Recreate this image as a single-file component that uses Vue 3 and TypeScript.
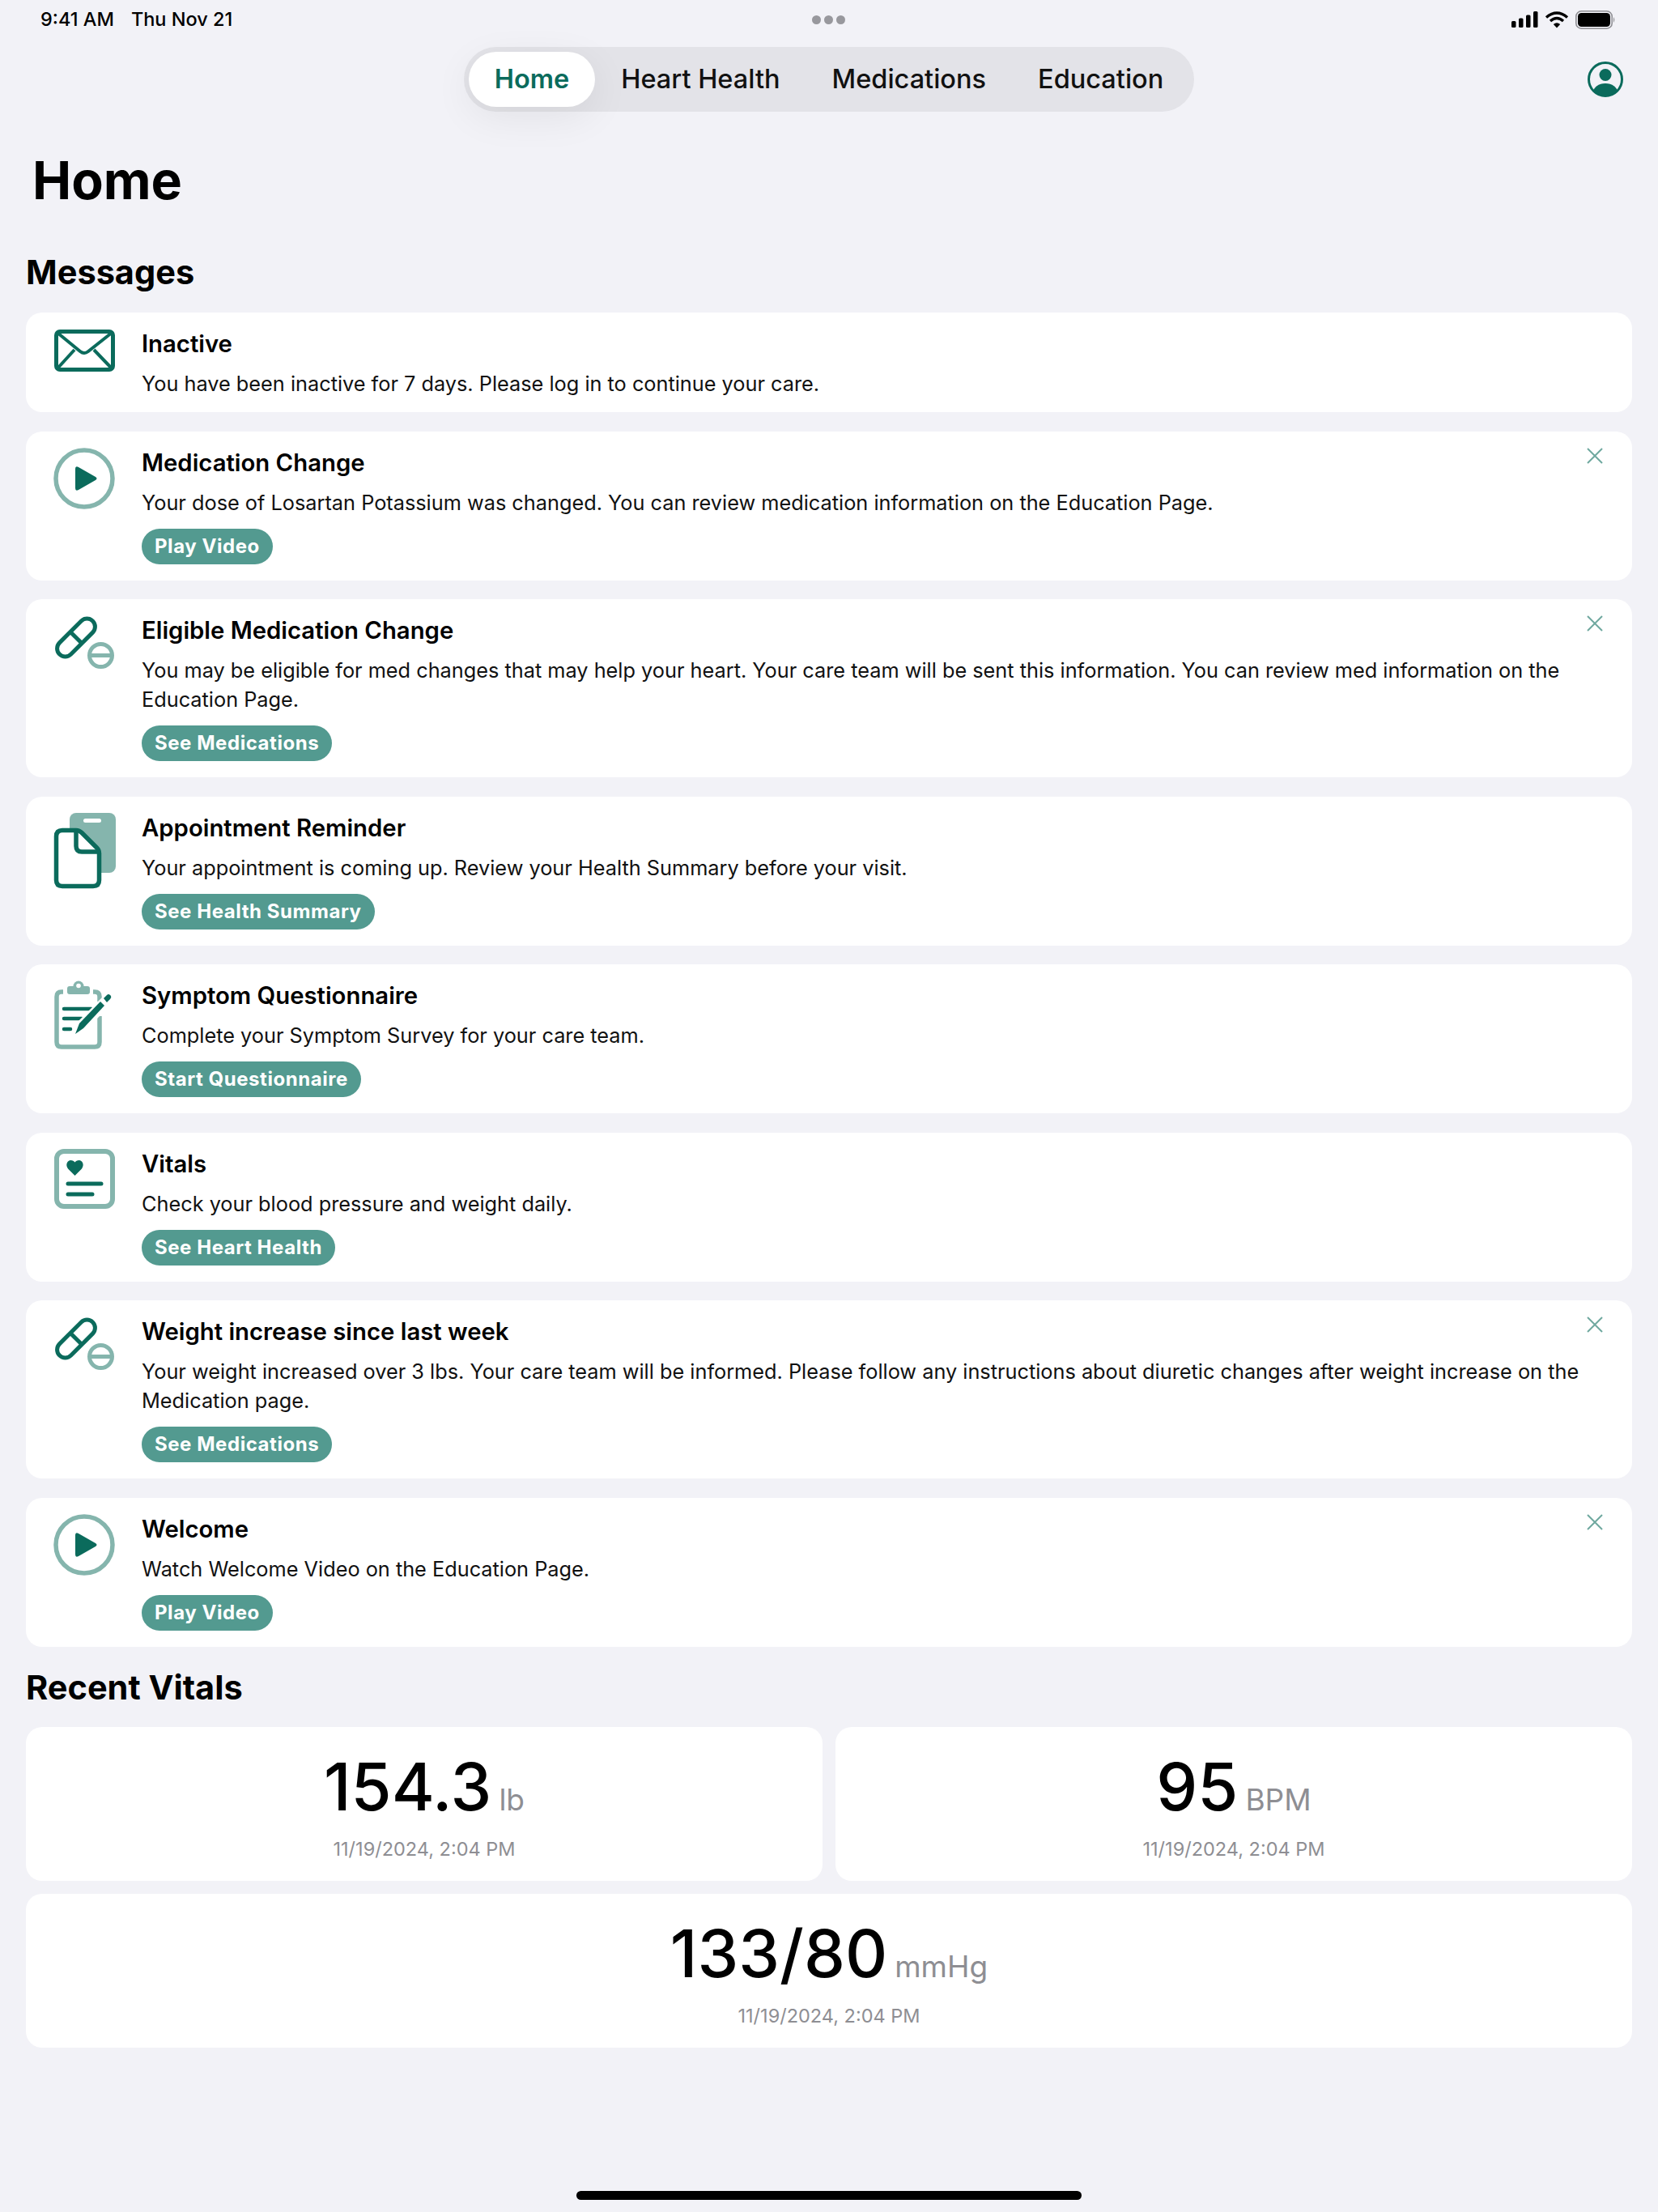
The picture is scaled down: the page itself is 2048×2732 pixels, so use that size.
<script setup lang="ts">
interface Message {
  icon: string
  title: string
  body: string
  action?: string
  closable?: boolean
}

const tabs: string[] = ['Home', 'Heart Health', 'Medications', 'Education']

const messages: Message[] = [
  { icon: 'mail', title: 'Inactive', body: 'You have been inactive for 7 days. Please log in to continue your care.' },
  { icon: 'play', title: 'Medication Change', body: 'Your dose of Losartan Potassium was changed. You can review medication information on the Education Page.', action: 'Play Video', closable: true },
  { icon: 'pill', title: 'Eligible Medication Change', body: 'You may be eligible for med changes that may help your heart. Your care team will be sent this information. You can review med information on the Education Page.', action: 'See Medications', closable: true },
  { icon: 'doc', title: 'Appointment Reminder', body: 'Your appointment is coming up. Review your Health Summary before your visit.', action: 'See Health Summary' },
  { icon: 'clip', title: 'Symptom Questionnaire', body: 'Complete your Symptom Survey for your care team.', action: 'Start Questionnaire' },
  { icon: 'vitals', title: 'Vitals', body: 'Check your blood pressure and weight daily.', action: 'See Heart Health' },
  { icon: 'pill', title: 'Weight increase since last week', body: 'Your weight increased over 3 lbs. Your care team will be informed. Please follow any instructions about diuretic changes after weight increase on the Medication page.', action: 'See Medications', closable: true },
  { icon: 'play', title: 'Welcome', body: 'Watch Welcome Video on the Education Page.', action: 'Play Video', closable: true },
]

const vitals = [
  { value: '154.3', unit: 'lb', date: '11/19/2024, 2:04 PM' },
  { value: '95', unit: 'BPM', date: '11/19/2024, 2:04 PM' },
  { value: '133/80', unit: 'mmHg', date: '11/19/2024, 2:04 PM', wide: true },
]
</script>

<template>
  <div class="page">
    <div class="status">
      <div class="status-left"><span>9:41 AM</span><span>Thu Nov 21</span></div>
      <div class="dots"><i></i><i></i><i></i></div>
      <div class="status-right">
        <svg width="33" height="20" viewBox="0 0 33 20"><rect x="0" y="12" width="5.5" height="8" rx="1.5"/><rect x="9" y="8.500" width="5.500" height="11.500" rx="1.500"/><rect x="18" y="4.500" width="5.500" height="15.500" rx="1.500"/><rect x="27" y="0" width="5.500" height="20" rx="1.500"/></svg>
        <svg width="30" height="23" viewBox="0 0 30 23" fill="none" stroke="#000" stroke-width="3.400"><path d="M2 8.500 Q15 -2.500 28 8.500"/><path d="M7 13 Q15 6 23 13"/><path d="M15 21.500 L10.800 17 Q15 13.500 19.200 17 Z" fill="#000" stroke="none"/></svg>
        <svg width="50" height="23" viewBox="0 0 50 23"><rect x="0.800" y="0.800" width="44.400" height="21.400" rx="6.500" fill="none" stroke="#8e8e93" stroke-width="1.600"/><rect x="3" y="3" width="40" height="17" rx="4.500"/><path d="M47 8 Q49.500 11.500 47 15 Z" fill="#8e8e93"/></svg>
      </div>
    </div>

    <header class="header">
      <nav class="tabs">
        <span v-for="(tab, i) in tabs" :key="tab" class="tab" :class="{ active: i === 0 }">{{ tab }}</span>
      </nav>
      <svg class="profile" width="44" height="44" viewBox="0 0 44 44">
        <defs><clipPath id="pc"><circle cx="22" cy="22" r="21"/></clipPath></defs>
        <circle cx="22" cy="22" r="20.500" fill="none" stroke="#0b6b5c" stroke-width="3"/>
        <circle cx="22" cy="16.500" r="7.500" fill="#0b6b5c"/>
        <ellipse cx="22" cy="38" rx="15" ry="11" fill="#0b6b5c" clip-path="url(#pc)"/>
      </svg>
    </header>

    <h1 class="title">Home</h1>
    <h2 class="section">Messages</h2>

    <section class="list">
      <article v-for="m in messages" :key="m.title" class="card">
        <svg class="icon" width="76" height="76" viewBox="0 0 76 76" fill="none">
          <template v-if="m.icon === 'mail'">
            <rect x="3.500" y="3.500" width="70" height="47" rx="4.500" stroke="#0b6b5c" stroke-width="5"/>
            <path d="M5 5 L33 28 Q38 32 43 28 L72 5 M5 49 L26 26 M72 49 L50 26" stroke="#0b6b5c" stroke-width="4"/>
          </template>
          <template v-else-if="m.icon === 'play'">
            <circle cx="38" cy="38" r="35" stroke="#85b5ad" stroke-width="5.500"/>
            <path d="M27 26 Q27 22 31 24 L52 36 Q55 38 52 40 L31 52 Q27 54 27 50 Z" fill="#0b6b5c"/>
          </template>
          <template v-else-if="m.icon === 'pill'">
            <g transform="rotate(-45 28 27.500)" stroke="#0b6b5c" stroke-width="5">
              <rect x="-1" y="17.500" width="58" height="20" rx="10"/>
              <path d="M28 17.500 V37.500"/>
            </g>
            <circle cx="58.500" cy="49.500" r="14" stroke="#85b5ad" stroke-width="5"/>
            <path d="M44 49.500 H73" stroke="#85b5ad" stroke-width="5"/>
          </template>
          <template v-else-if="m.icon === 'doc'">
            <rect x="20" y="0" width="57" height="74" rx="8" fill="#85b5ad"/>
            <rect x="37" y="7" width="22" height="5" rx="2.500" fill="#fff"/>
            <path d="M11 21.500 H28 Q32 21.500 35 24.500 L53.500 43 Q56.500 46 56.500 50 V83 Q56.500 90.500 49 90.500 H11 Q3.500 90.500 3.500 83 V29 Q3.500 21.500 11 21.500 Z" fill="#fff" stroke="#0b6b5c" stroke-width="5.500"/>
            <path d="M28 22 V41 Q28 48 35 48 H56" stroke="#0b6b5c" stroke-width="5.500"/>
          </template>
          <template v-else-if="m.icon === 'clip'">
            <path d="M12 14 H10 Q4 14 4 20 V76 Q4 82 10 82 H51 Q57 82 57 76 V44 M49 14 H51 Q57 14 57 20 V26" stroke="#85b5ad" stroke-width="5.500"/>
            <rect x="17" y="7" width="28" height="10" rx="3" fill="#85b5ad"/>
            <circle cx="31" cy="7" r="6.500" fill="#85b5ad"/>
            <circle cx="31" cy="6.500" r="2.800" fill="#fff"/>
            <path d="M13 35 H47 M13 47 H35 M13 60 H21" stroke="#0b6b5c" stroke-width="4.500" stroke-linecap="round"/>
            <path d="M24 70 L31 50 L60 21 L70 31 L40 61 Z" fill="#fff"/>
            <path d="M27 66 L32 53 L58 26 L63 31 L37 59 Z" fill="#0b6b5c"/>
            <path d="M62 22 L66 18 Q68 16 70 18 L71 19 Q72 21 70 23 L66 27 Z" fill="#0b6b5c"/>
          </template>
          <template v-else>
            <rect x="4" y="3" width="69" height="68" rx="9" stroke="#85b5ad" stroke-width="6"/>
            <path d="M26.500 33 L18 24.500 C13 18 20 10 26.500 16.500 C33 10 40 18 35 24.500 Z" fill="#0b6b5c"/>
            <path d="M18 43 H59 M18 56 H48" stroke="#0b6b5c" stroke-width="5" stroke-linecap="round"/>
          </template>
        </svg>
        <div class="content">
          <h3>{{ m.title }}</h3>
          <p>{{ m.body }}</p>
          <span v-if="m.action" class="action">{{ m.action }}</span>
        </div>
        <svg v-if="m.closable" class="close" width="20" height="20" viewBox="0 0 20 20"><path d="M1 1 L19 19 M19 1 L1 19" stroke="#6fa89f" stroke-width="2"/></svg>
      </article>
    </section>

    <h2 class="section recent">Recent Vitals</h2>

    <section class="vitals">
      <div v-for="v in vitals" :key="v.value" class="vital" :class="{ wide: v.wide }">
        <div class="reading"><span class="value">{{ v.value }}</span><span class="unit">{{ v.unit }}</span></div>
        <div class="date">{{ v.date }}</div>
      </div>
    </section>

    <div class="home-bar"></div>
  </div>
</template>

<style>
body { background: #f2f2f7; }
</style>

<style scoped>
.page {
  width: 2048px;
  height: 2732px;
  background: #f2f2f7;
  font-family: Inter, "Liberation Sans", sans-serif;
  color: #000;
  display: flex;
  flex-direction: column;
  padding: 0 32px;
  box-sizing: border-box;
  overflow: hidden;
}
.status {
  height: 48px;
  display: grid;
  grid-template-columns: 1fr auto 1fr;
  align-items: center;
  margin: 0 -32px;
  padding: 0 52px 0 50px;
  font-size: 23.500px;
  font-weight: 500;
}
.status-left { display: flex; gap: 21px; margin-top: -2px; }
.dots { display: flex; gap: 4px; }
.dots i { width: 11px; height: 11px; border-radius: 50%; background: #98989d; }
.status-right { display: flex; justify-content: flex-end; align-items: center; gap: 8px; }
.header {
  height: 80px;
  margin-top: 10px;
  display: grid;
  grid-template-columns: 1fr auto 1fr;
  align-items: center;
}
.tabs {
  grid-column: 2;
  display: flex;
  padding: 6px;
  background: #e3e3e8;
  border-radius: 40px;
  height: 80px;
  box-sizing: border-box;
  align-items: stretch;
}
.tab {
  display: flex;
  align-items: center;
  padding: 0 32px 2px;
  font-size: 32.500px;
  font-weight: 500;
  color: #111;
  border-radius: 34px;
}
.tab.active {
  background: #fff;
  color: #0b6b5c;
  font-weight: 600;
  box-shadow: 0 12px 50px rgba(0, 0, 0, 0.07);
}
.profile { justify-self: end; margin-right: 11px; }
.title {
  margin: 45px 0 0 8px;
  font-size: 64.500px;
  line-height: 80px;
  font-weight: 700;
}
.section {
  margin: 48px 0 25px 0;
  font-size: 41.500px;
  line-height: 50px;
  font-weight: 700;
}
.section.recent { margin-top: 25px; margin-bottom: 24px; }
.list { display: flex; flex-direction: column; gap: 23.500px; }
.card {
  position: relative;
  display: flex;
  gap: 33px;
  padding: 20px 35px 17px 34px;
  background: #fff;
  border-radius: 20px;
}
.icon { flex: none; overflow: visible; }
.content { flex: 1; min-width: 0; padding: 1px 24px 0 0; }
.content h3 {
  margin: 0;
  font-size: 29.300px;
  line-height: 36px;
  font-weight: 600;
}
.content p {
  margin: 13px 0 0;
  font-size: 25.300px;
  line-height: 36px;
  color: #111;
}
.action {
  display: table;
  margin: 14px 0 3px;
  padding: 0 16px;
  height: 44px;
  line-height: 44px;
  border-radius: 22px;
  background: #539a90;
  color: #fff;
  font-size: 24px;
  font-weight: 700;
  letter-spacing: 0.55px;
}
.close { position: absolute; top: 20px; right: 36px; }
.vitals { display: grid; grid-template-columns: 1fr 1fr; gap: 16px; }
.vital {
  height: 190px;
  background: #fff;
  border-radius: 20px;
  display: flex;
  flex-direction: column;
  align-items: center;
}
.vital.wide { grid-column: 1 / 3; }
.reading { display: flex; align-items: baseline; gap: 9px; margin-top: 26px; line-height: 96px; }
.value { font-size: 81px; font-weight: 500; }
.unit { font-size: 37px; color: #8e8e93; }
.date { margin-top: -3px; font-size: 23.500px; line-height: 32px; color: #8e8e93; }
.home-bar {
  margin: auto 0 15px;
  align-self: center;
  width: 624px;
  height: 11px;
  border-radius: 6px;
  background: #000;
}
</style>
